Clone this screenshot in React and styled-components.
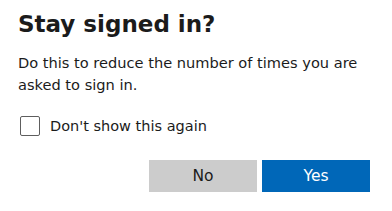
import styled, { createGlobalStyle } from 'styled-components'

const GlobalStyle = createGlobalStyle`
  body {
    margin: 0;
    background: #ffffff;
    font-family: "DejaVu Sans", sans-serif;
    color: #1b1b1b;
  }
`

const App = () => {
  return (
    <>
      <GlobalStyle />
      <Dialog>
        <Title>Stay signed in?</Title>
        <Text>Do this to reduce the number of times you are asked to sign in.</Text>
        <CheckRow>
          <Box type="checkbox" />
          <span>Don't show this again</span>
        </CheckRow>
        <Actions>
          <Button>No</Button>
          <Button primary>Yes</Button>
        </Actions>
      </Dialog>
    </>
  )
}

// Styles

const Dialog = styled.div`
  width: 352px;
  padding: 8px 22px 0 18px;
  display: flex;
  flex-direction: column;
`

const Title = styled.h1`
  margin: 0;
  font-size: 23px;
  font-weight: bold;
  line-height: 32px;
  color: #1b1b1b;
`

const Text = styled.p`
  margin: 12px 0 0;
  font-size: 14.6px;
  line-height: 22px;
  color: #1b1b1b;
`

const CheckRow = styled.label`
  margin-top: 20px;
  display: flex;
  align-items: center;
  gap: 10px;
  font-size: 14.5px;
  color: #1b1b1b;

  span {
    line-height: 20px;
  }
`

const Box = styled.input`
  appearance: none;
  margin: 0 0 0 2px;
  width: 20px;
  height: 20px;
  border: 1px solid #5e5e5e;
  border-radius: 2px;
  background: #ffffff;
`

const Actions = styled.div`
  margin-top: 24px;
  display: flex;
  justify-content: flex-end;
  gap: 5px;
`

const Button = styled.button`
  width: 108px;
  height: 32px;
  border: none;
  padding: 0;
  font-family: "DejaVu Sans", sans-serif;
  font-size: 15.5px;
  background: ${p => (p.primary ? '#0067b8' : '#cccccc')};
  color: ${p => (p.primary ? '#ffffff' : '#1b1b1b')};
`

export default App
